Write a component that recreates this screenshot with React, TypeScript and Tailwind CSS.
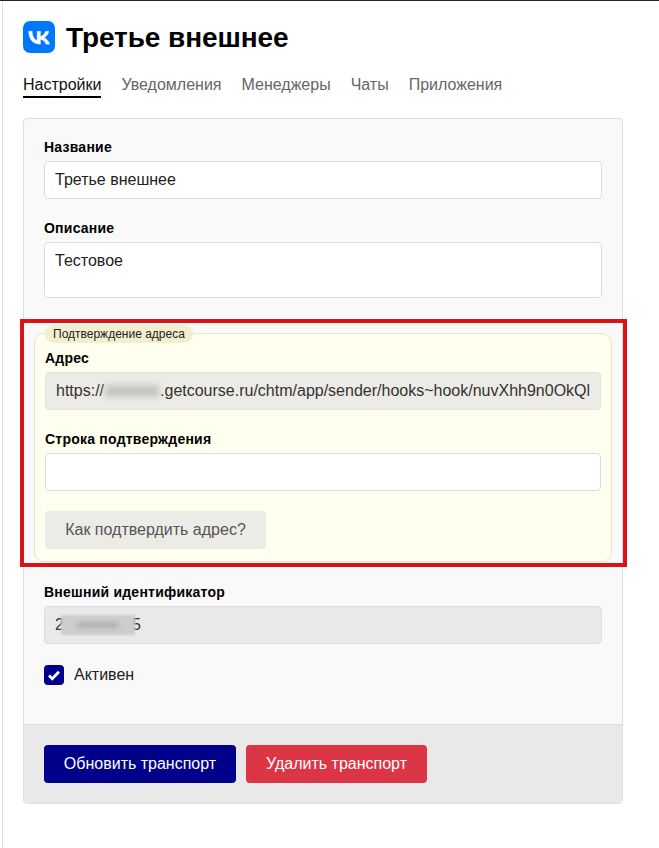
const tabs = ["Настройки", "Уведомления", "Менеджеры", "Чаты", "Приложения"];

const VkLogo = () => (
  <svg className="w-8 h-8 shrink-0" viewBox="0 0 32 32">
    <rect width="32" height="32" rx="7" fill="#0077ff" />
    <path
      fill="#fff"
      stroke="#fff"
      strokeWidth="0.3"
      d="M17 23.2C9.9 23.2 5.8 18.3 5.6 10.2h3.6c.1 6 2.8 8.500 4.900 9v-9h3.400v5.100c2.100-.2 4.300-2.600 5-5.100h3.400c-.6 3.200-2.900 5.500-4.600 6.500 1.700.8 4.400 2.900 5.400 6.500h-3.700c-.8-2.500-2.800-4.400-5.500-4.700v4.700z"
    />
  </svg>
);

const Label = ({ children }: { children: string }) => (
  <label className="block text-[14px] leading-[16px] tracking-[0.23px] font-bold text-black mb-[6px]">{children}</label>
);

export default function App() {
  return (
    <div className="min-h-[848px] border-t border-[#222] font-['Liberation_Sans',Arial,sans-serif] bg-white">
      <div className="ml-[2px] min-h-[847px] border-l border-[#dedede] pl-5 w-[623px]">
        <div className="flex items-center gap-[11px] pt-5 h-[52px]">
          <VkLogo />
          <h1 className="text-[28px] leading-8 tracking-[-0.08px] font-bold text-black pt-[2px]">Третье внешнее</h1>
        </div>
        <nav className="flex gap-5 mt-[20px] h-[25px]">
          {tabs.map((tab, i) => (
            <div
              key={tab}
              className={`text-[16px] leading-[24px] ${
                i === 0 ? "text-[#111] border-b-2 border-black" : "text-[#666]"
              }`}
            >
              {tab}
            </div>
          ))}
        </nav>
        <div className="mt-5 w-[600px] h-[686px] flex flex-col border border-[#dfdfdf] rounded-[4px] bg-[#f9f9f9]">
          <div className="flex-1 px-5 pt-[20px]">
            <Label>Название</Label>
            <input
              readOnly
              value="Третье внешнее"
              className="block w-full h-[38px] px-[10px] text-[16px] text-[#222] bg-white border border-[#dcdcdc] rounded-[4px]"
            />
            <div className="mt-[21px]">
              <Label>Описание</Label>
              <textarea
                readOnly
                value="Тестовое"
                className="block w-full h-[56px] px-[10px] py-[6px] text-[16px] leading-6 text-[#222] bg-white border border-[#dcdcdc] rounded-[4px] resize-none"
              />
            </div>

            <div className="-mx-6 mt-[21px] w-[607px] h-[248px] border-4 border-[#d91414] pl-[10px] pt-[10px]">
              <div className="relative w-[578px] h-[229px] bg-[#fffff0] border border-[#e8e5cf] rounded-[10px] px-[10px] pt-4">
                <span className="absolute -top-[9px] left-[10px] h-[18px] px-2 rounded-full bg-[#f2efcf] text-[12px] leading-[18px] text-[#222]">
                  Подтверждение адреса
                </span>
                <Label>Адрес</Label>
                <div className="h-[38px] px-[10px] flex items-center text-[16px] text-[#333] bg-[#ecebe6] border border-[#e3e2dc] rounded-[4px]">
                  <div className="flex items-center overflow-hidden whitespace-nowrap w-full h-full">
                    https://
                    <span className="w-[54px] h-[12px] shrink-0 bg-[#c4c4c1] blur-[3px] mx-[1px]" />
                    .getcourse.ru/chtm/app/sender/hooks~hook/nuvXhh9n0OkQl
                  </div>
                </div>
                <div className="mt-[21px]">
                  <Label>Строка подтверждения</Label>
                  <input className="block w-full h-[38px] bg-white border border-[#dcdcd4] rounded-[4px]" />
                </div>
                <button className="block mt-5 w-[221px] h-[38px] text-[16px] text-[#555] bg-[#ecebe6] rounded-[4px]">
                  Как подтвердить адрес?
                </button>
              </div>
            </div>

            <div className="mt-[17px]">
              <Label>Внешний идентификатор</Label>
              <div className="h-[38px] px-[10px] flex items-center text-[16px] text-[#333] bg-[#e9e9e9] border border-[#dedede] rounded-[4px]">
                <span>2</span>
                <span className="flex items-center justify-center w-[74px] h-[20px] shrink-0 -ml-[3px] -mr-[3px] bg-[#cdcdcd] blur-[1px]">
                  <span className="block w-[40px] h-[4px] bg-[#a3a3a3] blur-[2px]" />
                </span>
                <span>5</span>
              </div>
            </div>
            <label className="flex items-center gap-[10px] mt-5 text-[16px] leading-5 text-[#222]">
              <span className="w-5 h-5 rounded-[4px] bg-[#00008b] flex items-center justify-center">
                <svg viewBox="0 0 16 16" className="w-4 h-4" fill="none" stroke="#fff" strokeWidth="2.800">
                  <path d="M3 8.500l3.300 3.200L13 4.800" />
                </svg>
              </span>
              <span className="pt-[1px]">Активен</span>
            </label>
          </div>
          <div className="h-[79px] flex items-center gap-[10px] px-5 bg-[#e9e9e9] border-t border-[#dcdcdc] rounded-b-[4px]">
            <button className="w-[192px] h-[38px] text-[16px] text-white bg-[#00008b] rounded-[4px]">
              Обновить транспорт
            </button>
            <button className="w-[181px] h-[38px] text-[16px] text-white bg-[#dc3545] rounded-[4px]">
              Удалить транспорт
            </button>
          </div>
        </div>
      </div>
    </div>
  );
}
